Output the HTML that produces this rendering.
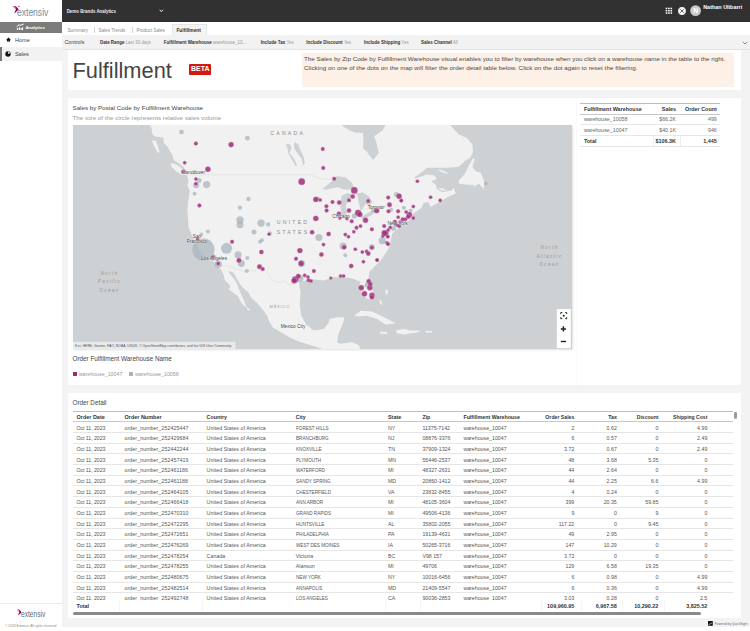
<!DOCTYPE html>
<html><head><meta charset="utf-8">
<style>
*{box-sizing:border-box;margin:0;padding:0}
html,body{width:750px;height:631px;overflow:hidden;background:#f3f3f3;font-family:"Liberation Sans",sans-serif;color:#333}
.a{position:absolute;white-space:nowrap}
.b{font-weight:bold}
#side{position:absolute;left:0;top:0;width:62px;height:631px;background:#fff}
#hdr{position:absolute;left:62px;top:0;width:688px;height:22px;background:#313131}
#tabs{position:absolute;left:62px;top:22px;width:688px;height:13px;background:#fff}
#ctl{position:absolute;left:62px;top:35px;width:688px;height:14.5px;background:#f2f2f2;border-bottom:1px solid #e4e4e4}
.card{position:absolute;background:#fff}
table{border-collapse:collapse}
</style></head><body>

<!-- sidebar -->
<div id="side">
  <svg class="a" style="left:0;top:0" width="62" height="22" viewBox="0 0 62 22">
    <polygon points="12.6,6.0 15.6,6.0 18.6,9.6 14.2,13.6 16.0,9.6" fill="#e24fa5"/>
    <polygon points="15.6,6.0 18.6,9.6 14.2,13.6 16.0,9.6" fill="#8a0a52"/>
    <polygon points="17.8,6.1 19.9,6.1 18.9,7.6" fill="#c23a8a"/>
  </svg>
  <div class="a" style="left:17.3px;top:5px;line-height:14px;font-size:10.8px;color:#6f8ba0;transform:scaleX(0.79);transform-origin:0 0">extensiv</div>
  <div class="a" style="left:0;top:22.2px;width:62px;height:10.8px;background:#7b7b7b"></div>
  <svg class="a" style="left:0;top:22px" width="30" height="11" viewBox="0 22 30 11">
    <polyline points="16.9,26.5 19.1,24.8 20.9,25.3 23.3,24.1" fill="none" stroke="#fff" stroke-width="1" stroke-linecap="round" stroke-linejoin="round"/>
    <g fill="#fff"><rect x="16.9" y="28.1" width="1.1" height="1.9"/><rect x="18.8" y="27.3" width="1.3" height="2.7"/><rect x="20.7" y="28.1" width="1.0" height="1.9"/><rect x="22.0" y="27.3" width="1.1" height="2.7"/></g>
  </svg>
  <div class="a b" style="left:25.4px;top:23.3px;line-height:10.3px;font-size:4.4px;color:#fff">Analytics</div>
  <div class="a" style="left:0;top:46.5px;width:62px;height:0.6px;background:#ececec"></div>
  <svg class="a" style="left:5.5px;top:37.3px" width="5" height="5" viewBox="0 0 5 5">
    <polygon points="2.5,0.5 4.8,2.7 4.1,2.7 4.1,4.6 0.9,4.6 0.9,2.7 0.2,2.7" fill="#111"/><rect x="2.1" y="3.3" width="0.8" height="1.3" fill="#555"/>
  </svg>
  <div class="a" style="left:14.9px;top:35.7px;line-height:8px;font-size:5.6px;color:#444">Home</div>
  <div class="a" style="left:0;top:47px;width:62px;height:14px;background:#f2f2f2;border-left:2px solid #777"></div>
  <svg class="a" style="left:4.8px;top:51px" width="6" height="6" viewBox="0 0 6 6">
    <circle cx="3" cy="3" r="2.7" fill="#111"/><path d="M3,3 L3,0.6 A2.4,2.4 0 0 1 5.2,2.2 Z" fill="#fff" opacity="0.85"/>
  </svg>
  <div class="a" style="left:14.9px;top:49.6px;line-height:8px;font-size:5.6px;color:#444">Sales</div>
  <div class="a" style="left:0;top:603.3px;width:62px;height:0.6px;background:#eaeaea"></div>
  <svg class="a" style="left:0;top:604px" width="62" height="16" viewBox="0 604 62 16">
    <polygon points="16.7,609.5 19.0,609.5 21.6,612.3 18.0,615.6 19.4,612.3" fill="#e24fa5"/>
    <polygon points="19.0,609.5 21.6,612.3 18.0,615.6 19.4,612.3" fill="#8a0a52"/>
  </svg>
  <div class="a" style="left:20.5px;top:607.5px;line-height:12px;font-size:8.6px;color:#4e6f88;transform:scaleX(0.77);transform-origin:0 0">extensiv</div>
  <div class="a" style="left:5px;top:624px;line-height:5px;font-size:3.27px;color:#888">© 2023 Extensiv. All rights reserved</div>
</div>

<!-- header -->
<div id="hdr">
  <div class="a b" style="left:4.7px;top:6.5px;line-height:10px;font-size:4.41px;color:#eee">Demo Brands Analytics</div>
  <svg class="a" style="left:96.5px;top:8.8px" width="5" height="4" viewBox="0 0 5 4"><polyline points="0.6,0.8 2.3,2.6 4.0,0.8" fill="none" stroke="#fff" stroke-width="1"/></svg>
  <svg class="a" style="left:603px;top:7px" width="8" height="8" viewBox="0 0 8 8">
    <g fill="#fff"><rect x="0.7" y="0.7" width="1.6" height="1.5"/><rect x="3.1" y="0.7" width="1.6" height="1.5"/><rect x="5.5" y="0.7" width="1.6" height="1.5"/>
    <rect x="0.7" y="3.0" width="1.6" height="1.5"/><rect x="3.1" y="3.0" width="1.6" height="1.5"/><rect x="5.5" y="3.0" width="1.6" height="1.5"/>
    <rect x="0.7" y="5.3" width="1.6" height="1.5"/><rect x="3.1" y="5.3" width="1.6" height="1.5"/><rect x="5.5" y="5.3" width="1.6" height="1.5"/></g>
  </svg>
  <svg class="a" style="left:614.5px;top:5.8px" width="10" height="10" viewBox="0 0 10 10">
    <circle cx="5" cy="5" r="3.9" fill="#f4f4f4"/><circle cx="5" cy="5" r="0.9" fill="#222"/>
    <g stroke="#333" stroke-width="0.6"><line x1="2.6" y1="2.6" x2="3.9" y2="3.9"/><line x1="7.4" y1="2.6" x2="6.1" y2="3.9"/><line x1="2.6" y1="7.4" x2="3.9" y2="6.1"/><line x1="7.4" y1="7.4" x2="6.1" y2="6.1"/></g>
  </svg>
  <svg class="a" style="left:627.5px;top:4.8px" width="11.5" height="11.5" viewBox="0 0 11.5 11.5">
    <circle cx="5.6" cy="5.6" r="5.4" fill="#c9c9c9"/>
    <text x="5.6" y="8.0" font-size="6.8" font-weight="bold" fill="#fff" text-anchor="middle" style="font-family:'Liberation Sans'">N</text>
  </svg>
  <div class="a b" style="left:641.2px;top:2.5px;line-height:8px;font-size:5.44px;color:#fff">Nathan Ulibarri</div>
</div>

<!-- tabs -->
<div id="tabs">
  <div class="a" style="left:5.4px;top:4px;line-height:9px;font-size:4.82px;color:#8a8a8a">Summary</div>
  <div class="a" style="left:32.2px;top:5px;width:0.6px;height:6px;background:#d5d5d5"></div>
  <div class="a" style="left:36.4px;top:4px;line-height:9px;font-size:4.63px;color:#8a8a8a">Sales Trends</div>
  <div class="a" style="left:70px;top:5px;width:0.6px;height:6px;background:#d5d5d5"></div>
  <div class="a" style="left:74.4px;top:4px;line-height:9px;font-size:4.59px;color:#8a8a8a">Product Sales</div>
  <div class="a" style="left:110.3px;top:2px;width:34.4px;height:11px;background:#f4f4f4;border:0.6px solid #e6e6e6;border-bottom:none"></div>
  <div class="a b" style="left:114.4px;top:4px;line-height:9px;font-size:4.87px;color:#333">Fulfillment</div>
</div>

<!-- controls -->
<div id="ctl">
  <div class="a" style="left:2.5px;top:-0.4px;line-height:14px;font-size:5.37px;color:#444">Controls</div>
  <div class="a" style="left:38px;top:0.5px;line-height:14px;font-size:4.44px;color:#999"><b style="color:#333">Date Range</b> Last 30 days</div>
  <div class="a" style="left:101.7px;top:0.5px;line-height:14px;font-size:4.5px;color:#999"><b style="color:#333">Fulfillment Warehouse</b> warehouse_10...</div>
  <div class="a" style="left:198.8px;top:0.5px;line-height:14px;font-size:4.5px;color:#999"><b style="color:#333">Include Tax</b> Yes</div>
  <div class="a" style="left:244.3px;top:0.5px;line-height:14px;font-size:4.5px;color:#999"><b style="color:#333">Include Discount</b> Yes</div>
  <div class="a" style="left:301.9px;top:0.5px;line-height:14px;font-size:4.5px;color:#999"><b style="color:#333">Include Shipping</b> Yes</div>
  <div class="a" style="left:358.9px;top:0.5px;line-height:14px;font-size:4.5px;color:#999"><b style="color:#333">Sales Channel</b> All</div>
  <svg class="a" style="left:679.5px;top:5.5px" width="6" height="4" viewBox="0 0 6 4"><polyline points="0.8,0.8 3,3 5.2,0.8" fill="none" stroke="#666" stroke-width="0.7"/></svg>
</div>

<!-- card 1 -->
<div class="card" style="left:68px;top:50px;width:672.5px;height:40.3px">
  <div class="a" style="left:4.5px;top:4.2px;line-height:34px;font-size:21.8px;color:#444">Fulfillment</div>
  <div class="a b" style="left:121.2px;top:14.4px;width:22.1px;height:10.8px;background:#d11a0f;border-radius:1px;color:#fff;font-size:7px;line-height:10.8px;text-align:center">BETA</div>
  <div style="position:absolute;left:233.5px;top:3px;width:432px;height:34px;background:#fdf0e6"></div>
  <div class="a" style="left:236px;top:5.3px;line-height:8.5px;font-size:6.26px;color:#4a4a4a">The Sales by Zip Code by Fulfillment Warehouse visual enables you to filter by warehouse when you click on a warehouse name in the table to the right.</div>
  <div class="a" style="left:236px;top:13.8px;line-height:8.5px;font-size:6.26px;color:#4a4a4a;letter-spacing:0.05px">Clicking on one of the dots on the map will filter the order detail table below. Click on the dot again to reset the filtering.</div>
</div>

<!-- card 2 -->
<div class="card" style="left:68px;top:97.5px;width:672.5px;height:287.5px">
  <div class="a" style="left:4.5px;top:5.4px;line-height:9px;font-size:6.19px;color:#444">Sales by Postal Code by Fulfillment Warehouse</div>
  <div class="a" style="left:4.5px;top:15.9px;line-height:9px;font-size:6.25px;color:#999">The size of the circle represents relative sales volume</div>
    <div class="a" style="left:4.5px;top:256px;line-height:9px;font-size:6.33px;color:#444">Order Fulfillment Warehouse Name</div>
  <div class="a" style="left:4.7px;top:274.1px;width:4.1px;height:4px;background:#9c2b74"></div>
  <div class="a" style="left:10.7px;top:272px;line-height:8px;font-size:5.32px;color:#999">warehouse_10047</div>
  <div class="a" style="left:61px;top:274.1px;width:4px;height:4px;background:#a8b2bb"></div>
  <div class="a" style="left:67px;top:272px;line-height:8px;font-size:5.32px;color:#999">warehouse_10058</div>
</div>

<!-- card 3 -->
<div class="card" style="left:68px;top:392.6px;width:672.5px;height:225.6px">
  <div class="a" style="left:4.5px;top:5px;line-height:9px;font-size:6.31px;color:#444">Order Detail</div>
</div>

<div class="a" style="left:62px;top:627px;width:688px;height:4px;background:#fff"></div>
<div style="position:absolute;left:72.8px;top:124.9px;width:499px;height:224.6px;box-shadow:1px 1px 2px rgba(0,0,0,0.12)"></div>
<svg style="position:absolute;left:72.8px;top:124.9px" width="499" height="224.6" viewBox="72.8 124.9 499 224.6">
<rect x="72.8" y="124.9" width="499" height="224.6" fill="#cdd1d3"/>
<polygon points="149.0,124.5 151.4,127.8 151.9,133.5 154.3,136.4 159.0,136.8 162.8,137.3 163.8,143.0 167.6,146.8 169.5,150.6 172.3,155.4 173.7,160.1 177.5,162.3 180.0,164.2 184.0,167.8 185.6,173.4 187.5,177.2 188.3,181.6 187.2,184.8 189.6,191.2 188.0,200.8 187.2,209.3 188.3,226.4 191.5,235.0 193.6,238.5 200.0,251.3 208.5,259.9 215.8,262.7 218.8,267.6 220.7,269.5 223.6,275.2 224.5,280.0 229.3,284.7 230.2,288.5 227.4,288.5 234.0,293.3 237.8,296.1 240.7,301.8 243.5,305.6 247.3,307.5 249.9,309.6 247.8,310.6 245.4,304.7 242.6,298.0 238.8,289.5 236.9,283.8 234.0,279.0 230.2,274.3 228.3,270.9 233.1,272.4 236.9,279.0 239.7,283.8 243.5,288.5 248.3,292.3 251.1,298.0 255.9,301.8 262.5,309.4 267.3,316.1 268.2,320.0 272.9,327.7 284.0,334.0 290.0,337.7 300.0,341.9 310.9,345.2 325.9,350.0 326.7,351.0 360.4,351.0 358.9,345.1 351.6,342.1 339.9,343.6 336.9,342.1 338.4,333.3 342.8,323.1 344.3,317.2 338.4,317.2 329.6,318.7 328.1,323.1 323.7,328.9 313.5,330.4 306.1,324.5 301.0,315.7 299.5,304.0 300.3,292.3 298.8,282.0 312.0,279.1 323.7,280.5 334.0,276.9 348.7,277.6 354.5,279.1 360.4,282.0 358.9,286.4 361.9,293.7 366.3,298.1 372.1,299.6 373.6,295.2 372.1,289.3 367.7,282.0 369.2,271.7 376.5,264.4 380.9,260.0 385.3,253.3 389.3,246.7 390.7,240.0 392.0,233.3 400.0,226.7 409.3,220.0 413.3,213.3 421.3,208.0 423.2,203.2 428.0,202.0 430.4,206.8 447.2,197.2 455.6,193.3 453.3,187.7 451.1,190.5 446.0,191.5 442.2,192.2 436.6,188.8 435.5,184.4 431.1,181.1 436.6,178.8 434.4,175.5 426.7,174.4 420.0,176.6 415.0,178.5 414.0,177.5 420.0,173.3 426.7,167.7 447.7,167.7 458.8,166.6 464.4,161.1 469.9,157.7 472.7,152.2 472.2,144.4 466.6,137.8 458.8,134.4 454.4,130.0 449.6,124.5" fill="#f1f1f1"/>
<polygon points="170.5,163.3 175.0,163.6 180.5,167.3 185.0,170.8 186.8,174.6 182.0,175.0 176.0,171.2 171.0,166.5" fill="#f1f1f1"/>
<polygon points="151.9,140.2 155.7,140.6 157.6,145.9 159.5,152.5 157.6,152.5 154.3,146.8 152.4,143.0" fill="#f1f1f1"/>
<polygon points="473.8,158.3 472.2,158.9 468.8,165.5 465.5,172.2 462.2,176.6 458.8,180.0 458.3,183.3 464.4,184.4 474.4,184.9 472.7,187.7 478.8,183.3 482.2,187.7 483.3,189.4 484.4,182.2 482.2,176.6 480.5,172.7 475.5,171.1 472.2,166.6 474.4,159.4" fill="#f1f1f1"/>
<polygon points="353.8,315.7 360.4,310.6 372.1,311.3 383.9,317.2 395.6,323.1 385.3,324.5 376.5,318.7 366.3,315.7 358.9,316.5" fill="#f1f1f1"/>
<polygon points="396.0,330.2 404.0,329.0 410.0,330.5 418.0,330.5 420.0,332.0 410.0,333.5 404.0,334.5 396.0,333.0" fill="#f1f1f1"/>
<polygon points="379.5,331.5 387.0,332.0 387.0,334.0 380.0,333.5" fill="#f1f1f1"/>
<polygon points="425.3,330.7 432.0,330.7 432.0,332.5 425.3,332.5" fill="#f1f1f1"/>
<polygon points="386.0,289.0 388.0,290.5 386.5,296.0 385.0,292.0" fill="#f1f1f1"/>
<polygon points="379.0,300.0 381.0,300.5 382.0,305.0 380.0,304.0" fill="#f1f1f1"/>
<polygon points="340.3,124.0 344.0,126.8 349.6,130.5 354.3,132.4 362.7,132.9 363.1,138.0 363.1,148.3 366.4,151.1 370.1,156.7 373.0,160.0 378.6,152.9 375.8,140.8 373.9,136.1 382.3,130.5 386.0,124.0" fill="#cdd1d3"/>
<polygon points="294.0,142.1 297.8,143.6 300.7,151.2 303.5,156.9 304.5,163.5 302.6,165.4 301.6,158.8 297.8,154.0 294.0,148.3" fill="#cdd1d3"/>
<polygon points="285.5,144.5 289.3,144.0 291.2,147.4 289.3,153.1 294.0,158.8 296.9,165.4 295.5,166.4 293.1,161.6 288.3,154.0 287.4,148.3" fill="#cdd1d3"/>
<polygon points="322.1,188.7 328.5,183.9 337.1,175.9 345.6,177.5 352.0,182.8 354.1,188.7 347.7,189.7 342.4,189.2 338.1,187.1 331.7,188.1 326.4,189.7" fill="#cdd1d3"/>
<polygon points="341.3,195.6 347.7,192.9 352.0,194.5 348.8,199.9 345.6,205.2 346.7,212.7 344.5,216.9 341.3,214.8 340.3,206.3" fill="#cdd1d3"/>
<polygon points="355.2,193.5 362.7,192.4 369.1,196.7 372.3,202.0 370.1,205.2 364.8,204.1 362.7,208.4 360.5,210.5 358.4,202.0 357.3,195.6" fill="#cdd1d3"/>
<polygon points="360.5,216.9 368.0,212.7 375.5,209.5 379.7,207.3 377.6,210.5 370.1,215.9 362.7,219.1" fill="#cdd1d3"/>
<polygon points="373.3,207.9 379.7,206.3 386.1,205.2 384.0,207.9 376.5,209.5" fill="#cdd1d3"/>
<polygon points="437.8,169.2 441.0,169.6 447.7,172.8 447.0,173.6 441.0,172.0" fill="#f1f1f1"/>
<polygon points="438.0,187.8 443.0,188.3 446.6,190.6 441.0,190.2" fill="#f1f1f1"/>
<polyline points="185,174.7 309.7,174.5 311.2,175 321.6,178.8 332.1,179.7 345,177" fill="none" stroke="#ddd9d3" stroke-width="0.5"/>
<polyline points="218,265.2 227.4,265.7 243.5,270.9 255.9,270.5 257.8,267.6 266.3,271.4 271.1,279 277.5,282.5 283.9,281 290.2,285 298.8,282" fill="none" stroke="#ddd9d3" stroke-width="0.5"/>
<text x="287.5" y="134.9" font-size="5.2" letter-spacing="2.2" fill="#8c8c8c" text-anchor="middle" style="font-family:'Liberation Sans';">CANADA</text>
<text x="292.8" y="223.9" font-size="5.2" letter-spacing="2.2" fill="#8c8c8c" text-anchor="middle" style="font-family:'Liberation Sans';">UNITED</text>
<text x="292.8" y="233.9" font-size="5.2" letter-spacing="2.2" fill="#8c8c8c" text-anchor="middle" style="font-family:'Liberation Sans';">STATES</text>
<text x="279.6" y="308" font-size="4" letter-spacing="0.8" fill="#9a9a9a" text-anchor="middle" style="font-family:'Liberation Sans';">MÉXICO</text>
<text x="109.3" y="274.5" font-size="4.6" letter-spacing="1.4" fill="#999" text-anchor="middle" style="font-family:'Liberation Sans';font-style:italic;">North</text>
<text x="109.3" y="283" font-size="4.6" letter-spacing="1.4" fill="#999" text-anchor="middle" style="font-family:'Liberation Sans';font-style:italic;">Pacific</text>
<text x="109.3" y="291.8" font-size="4.6" letter-spacing="1.4" fill="#999" text-anchor="middle" style="font-family:'Liberation Sans';font-style:italic;">Ocean</text>
<text x="549.3" y="249" font-size="4.6" letter-spacing="1.4" fill="#999" text-anchor="middle" style="font-family:'Liberation Sans';font-style:italic;">North</text>
<text x="549.3" y="257.5" font-size="4.6" letter-spacing="1.4" fill="#999" text-anchor="middle" style="font-family:'Liberation Sans';font-style:italic;">Atlantic</text>
<text x="549.3" y="266" font-size="4.6" letter-spacing="1.4" fill="#999" text-anchor="middle" style="font-family:'Liberation Sans';font-style:italic;">Ocean</text>
<circle cx="181.3" cy="132" r="2.4" fill="#a9b4bd" fill-opacity="0.75"/>
<circle cx="247.2" cy="138.1" r="2.4" fill="#a9b4bd" fill-opacity="0.75"/>
<circle cx="194.4" cy="172" r="2" fill="#a9b4bd" fill-opacity="0.75"/>
<circle cx="198.9" cy="180.3" r="2.5" fill="#a9b4bd" fill-opacity="0.75"/>
<circle cx="196" cy="185.1" r="3" fill="#a9b4bd" fill-opacity="0.75"/>
<circle cx="206.4" cy="184.5" r="3.6" fill="#a9b4bd" fill-opacity="0.75"/>
<circle cx="194.4" cy="193.6" r="2" fill="#a9b4bd" fill-opacity="0.75"/>
<circle cx="248.2" cy="198.9" r="2.2" fill="#a9b4bd" fill-opacity="0.75"/>
<circle cx="239.8" cy="207.5" r="2.2" fill="#a9b4bd" fill-opacity="0.75"/>
<circle cx="207.7" cy="231.3" r="2" fill="#a9b4bd" fill-opacity="0.75"/>
<circle cx="201" cy="234.5" r="2" fill="#a9b4bd" fill-opacity="0.75"/>
<circle cx="203.2" cy="249.6" r="11.1" fill="#a9b4bd" fill-opacity="0.75"/>
<circle cx="226.4" cy="248.2" r="5.5" fill="#a9b4bd" fill-opacity="0.75"/>
<circle cx="237.9" cy="254.7" r="3.5" fill="#a9b4bd" fill-opacity="0.75"/>
<circle cx="241.1" cy="263.4" r="3.5" fill="#a9b4bd" fill-opacity="0.75"/>
<circle cx="247.1" cy="257.9" r="2" fill="#a9b4bd" fill-opacity="0.75"/>
<circle cx="246.6" cy="270.9" r="2" fill="#a9b4bd" fill-opacity="0.75"/>
<circle cx="212.8" cy="257.7" r="3.2" fill="#a9b4bd" fill-opacity="0.75"/>
<circle cx="218.1" cy="264.1" r="3.6" fill="#a9b4bd" fill-opacity="0.75"/>
<circle cx="239.8" cy="219.9" r="3.7" fill="#a9b4bd" fill-opacity="0.75"/>
<circle cx="239.8" cy="224.6" r="3.5" fill="#a9b4bd" fill-opacity="0.75"/>
<circle cx="260.9" cy="223" r="3.7" fill="#a9b4bd" fill-opacity="0.75"/>
<circle cx="268" cy="224.3" r="2.2" fill="#a9b4bd" fill-opacity="0.75"/>
<circle cx="253.8" cy="231.8" r="2.5" fill="#a9b4bd" fill-opacity="0.75"/>
<circle cx="269.6" cy="233.3" r="2.2" fill="#a9b4bd" fill-opacity="0.75"/>
<circle cx="261.7" cy="240.2" r="2" fill="#a9b4bd" fill-opacity="0.75"/>
<circle cx="259.8" cy="241.7" r="2" fill="#a9b4bd" fill-opacity="0.75"/>
<circle cx="317.5" cy="198.5" r="2.2" fill="#a9b4bd" fill-opacity="0.75"/>
<circle cx="318.7" cy="237.3" r="3.5" fill="#a9b4bd" fill-opacity="0.75"/>
<circle cx="301.3" cy="263.4" r="3.5" fill="#a9b4bd" fill-opacity="0.75"/>
<circle cx="299.7" cy="278.5" r="3.5" fill="#a9b4bd" fill-opacity="0.75"/>
<circle cx="330.6" cy="278" r="2" fill="#a9b4bd" fill-opacity="0.75"/>
<circle cx="354.1" cy="215.9" r="2.5" fill="#a9b4bd" fill-opacity="0.75"/>
<circle cx="373.3" cy="210" r="2.5" fill="#a9b4bd" fill-opacity="0.75"/>
<circle cx="342.9" cy="246" r="3.5" fill="#a9b4bd" fill-opacity="0.75"/>
<circle cx="345.1" cy="255.2" r="2" fill="#a9b4bd" fill-opacity="0.75"/>
<circle cx="371.7" cy="247.1" r="3" fill="#a9b4bd" fill-opacity="0.75"/>
<circle cx="366.8" cy="285" r="2.5" fill="#a9b4bd" fill-opacity="0.75"/>
<circle cx="390.9" cy="209.7" r="2" fill="#a9b4bd" fill-opacity="0.75"/>
<circle cx="396.3" cy="194.5" r="2.5" fill="#a9b4bd" fill-opacity="0.75"/>
<circle cx="403.7" cy="207.7" r="2" fill="#a9b4bd" fill-opacity="0.75"/>
<circle cx="410.4" cy="210.7" r="2" fill="#a9b4bd" fill-opacity="0.75"/>
<circle cx="393.3" cy="228.3" r="2.5" fill="#a9b4bd" fill-opacity="0.75"/>
<circle cx="382" cy="240.7" r="3.5" fill="#a9b4bd" fill-opacity="0.75"/>
<circle cx="485.6" cy="183.5" r="2" fill="#a9b4bd" fill-opacity="0.75"/>
<circle cx="195.7" cy="143.5" r="1.98" fill="#a1317b" fill-opacity="0.88" stroke="#d9a8c9" stroke-opacity="0.8" stroke-width="0.45"/>
<circle cx="230.9" cy="144.5" r="2.70" fill="#a1317b" fill-opacity="0.88" stroke="#d9a8c9" stroke-opacity="0.8" stroke-width="0.45"/>
<circle cx="184.5" cy="162.7" r="1.80" fill="#a1317b" fill-opacity="0.88" stroke="#d9a8c9" stroke-opacity="0.8" stroke-width="0.45"/>
<circle cx="207.7" cy="169.1" r="2.70" fill="#a1317b" fill-opacity="0.88" stroke="#d9a8c9" stroke-opacity="0.8" stroke-width="0.45"/>
<circle cx="183.2" cy="171.7" r="2.25" fill="#a1317b" fill-opacity="0.88" stroke="#d9a8c9" stroke-opacity="0.8" stroke-width="0.45"/>
<circle cx="195.7" cy="178.9" r="1.80" fill="#a1317b" fill-opacity="0.88" stroke="#d9a8c9" stroke-opacity="0.8" stroke-width="0.45"/>
<circle cx="195.7" cy="183.7" r="1.80" fill="#a1317b" fill-opacity="0.88" stroke="#d9a8c9" stroke-opacity="0.8" stroke-width="0.45"/>
<circle cx="199.2" cy="205.3" r="1.98" fill="#a1317b" fill-opacity="0.88" stroke="#d9a8c9" stroke-opacity="0.8" stroke-width="0.45"/>
<circle cx="231.9" cy="241.7" r="1.98" fill="#a1317b" fill-opacity="0.88" stroke="#d9a8c9" stroke-opacity="0.8" stroke-width="0.45"/>
<circle cx="238.7" cy="260.3" r="2.43" fill="#a1317b" fill-opacity="0.88" stroke="#d9a8c9" stroke-opacity="0.8" stroke-width="0.45"/>
<circle cx="213" cy="257" r="1.80" fill="#a1317b" fill-opacity="0.88" stroke="#d9a8c9" stroke-opacity="0.8" stroke-width="0.45"/>
<circle cx="218" cy="263.5" r="1.80" fill="#a1317b" fill-opacity="0.88" stroke="#d9a8c9" stroke-opacity="0.8" stroke-width="0.45"/>
<circle cx="197.5" cy="239" r="1.98" fill="#a1317b" fill-opacity="0.88" stroke="#d9a8c9" stroke-opacity="0.8" stroke-width="0.45"/>
<circle cx="268.8" cy="234.1" r="1.62" fill="#a1317b" fill-opacity="0.88" stroke="#d9a8c9" stroke-opacity="0.8" stroke-width="0.45"/>
<circle cx="261.2" cy="252" r="2.25" fill="#a1317b" fill-opacity="0.88" stroke="#d9a8c9" stroke-opacity="0.8" stroke-width="0.45"/>
<circle cx="259.3" cy="266.6" r="2.43" fill="#a1317b" fill-opacity="0.88" stroke="#d9a8c9" stroke-opacity="0.8" stroke-width="0.45"/>
<circle cx="262.5" cy="269" r="1.98" fill="#a1317b" fill-opacity="0.88" stroke="#d9a8c9" stroke-opacity="0.8" stroke-width="0.45"/>
<circle cx="322.6" cy="148.8" r="1.98" fill="#a1317b" fill-opacity="0.88" stroke="#d9a8c9" stroke-opacity="0.8" stroke-width="0.45"/>
<circle cx="323" cy="167.8" r="1.98" fill="#a1317b" fill-opacity="0.88" stroke="#d9a8c9" stroke-opacity="0.8" stroke-width="0.45"/>
<circle cx="334" cy="178.6" r="1.98" fill="#a1317b" fill-opacity="0.88" stroke="#d9a8c9" stroke-opacity="0.8" stroke-width="0.45"/>
<circle cx="301.5" cy="181.6" r="3.33" fill="#a1317b" fill-opacity="0.88" stroke="#d9a8c9" stroke-opacity="0.8" stroke-width="0.45"/>
<circle cx="315.6" cy="199.3" r="2.70" fill="#a1317b" fill-opacity="0.88" stroke="#d9a8c9" stroke-opacity="0.8" stroke-width="0.45"/>
<circle cx="315.6" cy="218.3" r="2.70" fill="#a1317b" fill-opacity="0.88" stroke="#d9a8c9" stroke-opacity="0.8" stroke-width="0.45"/>
<circle cx="311.9" cy="232.1" r="2.25" fill="#a1317b" fill-opacity="0.88" stroke="#d9a8c9" stroke-opacity="0.8" stroke-width="0.45"/>
<circle cx="299.7" cy="250.5" r="2.70" fill="#a1317b" fill-opacity="0.88" stroke="#d9a8c9" stroke-opacity="0.8" stroke-width="0.45"/>
<circle cx="295.8" cy="258.7" r="1.98" fill="#a1317b" fill-opacity="0.88" stroke="#d9a8c9" stroke-opacity="0.8" stroke-width="0.45"/>
<circle cx="301" cy="263.4" r="2.70" fill="#a1317b" fill-opacity="0.88" stroke="#d9a8c9" stroke-opacity="0.8" stroke-width="0.45"/>
<circle cx="313.7" cy="270.9" r="1.98" fill="#a1317b" fill-opacity="0.88" stroke="#d9a8c9" stroke-opacity="0.8" stroke-width="0.45"/>
<circle cx="323.3" cy="244.5" r="1.80" fill="#a1317b" fill-opacity="0.88" stroke="#d9a8c9" stroke-opacity="0.8" stroke-width="0.45"/>
<circle cx="321.2" cy="254.5" r="2.25" fill="#a1317b" fill-opacity="0.88" stroke="#d9a8c9" stroke-opacity="0.8" stroke-width="0.45"/>
<circle cx="328.4" cy="233.9" r="2.25" fill="#a1317b" fill-opacity="0.88" stroke="#d9a8c9" stroke-opacity="0.8" stroke-width="0.45"/>
<circle cx="295" cy="279.3" r="3.15" fill="#a1317b" fill-opacity="0.88" stroke="#d9a8c9" stroke-opacity="0.8" stroke-width="0.45"/>
<circle cx="298.1" cy="276.1" r="2.43" fill="#a1317b" fill-opacity="0.88" stroke="#d9a8c9" stroke-opacity="0.8" stroke-width="0.45"/>
<circle cx="304.5" cy="275.3" r="1.80" fill="#a1317b" fill-opacity="0.88" stroke="#d9a8c9" stroke-opacity="0.8" stroke-width="0.45"/>
<circle cx="307.7" cy="276.9" r="1.80" fill="#a1317b" fill-opacity="0.88" stroke="#d9a8c9" stroke-opacity="0.8" stroke-width="0.45"/>
<circle cx="308.4" cy="280.1" r="1.98" fill="#a1317b" fill-opacity="0.88" stroke="#d9a8c9" stroke-opacity="0.8" stroke-width="0.45"/>
<circle cx="310.8" cy="280.9" r="1.80" fill="#a1317b" fill-opacity="0.88" stroke="#d9a8c9" stroke-opacity="0.8" stroke-width="0.45"/>
<circle cx="293.9" cy="280.6" r="2.70" fill="#a1317b" fill-opacity="0.88" stroke="#d9a8c9" stroke-opacity="0.8" stroke-width="0.45"/>
<circle cx="330.6" cy="278" r="1.44" fill="#a1317b" fill-opacity="0.88" stroke="#d9a8c9" stroke-opacity="0.8" stroke-width="0.45"/>
<circle cx="340.4" cy="275.9" r="1.80" fill="#a1317b" fill-opacity="0.88" stroke="#d9a8c9" stroke-opacity="0.8" stroke-width="0.45"/>
<circle cx="343.4" cy="275.9" r="1.80" fill="#a1317b" fill-opacity="0.88" stroke="#d9a8c9" stroke-opacity="0.8" stroke-width="0.45"/>
<circle cx="354.1" cy="190.3" r="3.33" fill="#a1317b" fill-opacity="0.88" stroke="#d9a8c9" stroke-opacity="0.8" stroke-width="0.45"/>
<circle cx="352.5" cy="196.5" r="2.25" fill="#a1317b" fill-opacity="0.88" stroke="#d9a8c9" stroke-opacity="0.8" stroke-width="0.45"/>
<circle cx="348.8" cy="200.1" r="1.98" fill="#a1317b" fill-opacity="0.88" stroke="#d9a8c9" stroke-opacity="0.8" stroke-width="0.45"/>
<circle cx="339" cy="202.5" r="2.25" fill="#a1317b" fill-opacity="0.88" stroke="#d9a8c9" stroke-opacity="0.8" stroke-width="0.45"/>
<circle cx="332.3" cy="201.8" r="1.98" fill="#a1317b" fill-opacity="0.88" stroke="#d9a8c9" stroke-opacity="0.8" stroke-width="0.45"/>
<circle cx="326.2" cy="206.1" r="1.98" fill="#a1317b" fill-opacity="0.88" stroke="#d9a8c9" stroke-opacity="0.8" stroke-width="0.45"/>
<circle cx="326.4" cy="210.5" r="1.98" fill="#a1317b" fill-opacity="0.88" stroke="#d9a8c9" stroke-opacity="0.8" stroke-width="0.45"/>
<circle cx="348.8" cy="210.5" r="2.25" fill="#a1317b" fill-opacity="0.88" stroke="#d9a8c9" stroke-opacity="0.8" stroke-width="0.45"/>
<circle cx="338.7" cy="213.7" r="2.25" fill="#a1317b" fill-opacity="0.88" stroke="#d9a8c9" stroke-opacity="0.8" stroke-width="0.45"/>
<circle cx="339.7" cy="218" r="1.80" fill="#a1317b" fill-opacity="0.88" stroke="#d9a8c9" stroke-opacity="0.8" stroke-width="0.45"/>
<circle cx="346.7" cy="218.5" r="1.80" fill="#a1317b" fill-opacity="0.88" stroke="#d9a8c9" stroke-opacity="0.8" stroke-width="0.45"/>
<circle cx="357.9" cy="212.7" r="3.15" fill="#a1317b" fill-opacity="0.88" stroke="#d9a8c9" stroke-opacity="0.8" stroke-width="0.45"/>
<circle cx="359.5" cy="214.3" r="2.70" fill="#a1317b" fill-opacity="0.88" stroke="#d9a8c9" stroke-opacity="0.8" stroke-width="0.45"/>
<circle cx="351.5" cy="221.2" r="1.98" fill="#a1317b" fill-opacity="0.88" stroke="#d9a8c9" stroke-opacity="0.8" stroke-width="0.45"/>
<circle cx="356.3" cy="227.6" r="1.98" fill="#a1317b" fill-opacity="0.88" stroke="#d9a8c9" stroke-opacity="0.8" stroke-width="0.45"/>
<circle cx="360.3" cy="226" r="1.80" fill="#a1317b" fill-opacity="0.88" stroke="#d9a8c9" stroke-opacity="0.8" stroke-width="0.45"/>
<circle cx="365.3" cy="220.1" r="2.70" fill="#a1317b" fill-opacity="0.88" stroke="#d9a8c9" stroke-opacity="0.8" stroke-width="0.45"/>
<circle cx="368" cy="200.9" r="1.98" fill="#a1317b" fill-opacity="0.88" stroke="#d9a8c9" stroke-opacity="0.8" stroke-width="0.45"/>
<circle cx="376.5" cy="210.5" r="2.70" fill="#a1317b" fill-opacity="0.88" stroke="#d9a8c9" stroke-opacity="0.8" stroke-width="0.45"/>
<circle cx="320" cy="199.9" r="1.80" fill="#a1317b" fill-opacity="0.88" stroke="#d9a8c9" stroke-opacity="0.8" stroke-width="0.45"/>
<circle cx="371.7" cy="229.2" r="1.98" fill="#a1317b" fill-opacity="0.88" stroke="#d9a8c9" stroke-opacity="0.8" stroke-width="0.45"/>
<circle cx="384" cy="226" r="1.98" fill="#a1317b" fill-opacity="0.88" stroke="#d9a8c9" stroke-opacity="0.8" stroke-width="0.45"/>
<circle cx="345.1" cy="234.5" r="1.80" fill="#a1317b" fill-opacity="0.88" stroke="#d9a8c9" stroke-opacity="0.8" stroke-width="0.45"/>
<circle cx="348.3" cy="236.6" r="1.80" fill="#a1317b" fill-opacity="0.88" stroke="#d9a8c9" stroke-opacity="0.8" stroke-width="0.45"/>
<circle cx="353.6" cy="231.7" r="1.80" fill="#a1317b" fill-opacity="0.88" stroke="#d9a8c9" stroke-opacity="0.8" stroke-width="0.45"/>
<circle cx="344" cy="247.1" r="2.25" fill="#a1317b" fill-opacity="0.88" stroke="#d9a8c9" stroke-opacity="0.8" stroke-width="0.45"/>
<circle cx="355.1" cy="249.2" r="1.80" fill="#a1317b" fill-opacity="0.88" stroke="#d9a8c9" stroke-opacity="0.8" stroke-width="0.45"/>
<circle cx="371.7" cy="247.5" r="1.98" fill="#a1317b" fill-opacity="0.88" stroke="#d9a8c9" stroke-opacity="0.8" stroke-width="0.45"/>
<circle cx="362.1" cy="252" r="1.80" fill="#a1317b" fill-opacity="0.88" stroke="#d9a8c9" stroke-opacity="0.8" stroke-width="0.45"/>
<circle cx="366.4" cy="251.3" r="1.80" fill="#a1317b" fill-opacity="0.88" stroke="#d9a8c9" stroke-opacity="0.8" stroke-width="0.45"/>
<circle cx="368.1" cy="253.5" r="2.25" fill="#a1317b" fill-opacity="0.88" stroke="#d9a8c9" stroke-opacity="0.8" stroke-width="0.45"/>
<circle cx="351" cy="265.8" r="2.25" fill="#a1317b" fill-opacity="0.88" stroke="#d9a8c9" stroke-opacity="0.8" stroke-width="0.45"/>
<circle cx="363.2" cy="261.6" r="1.80" fill="#a1317b" fill-opacity="0.88" stroke="#d9a8c9" stroke-opacity="0.8" stroke-width="0.45"/>
<circle cx="377" cy="259.9" r="1.80" fill="#a1317b" fill-opacity="0.88" stroke="#d9a8c9" stroke-opacity="0.8" stroke-width="0.45"/>
<circle cx="376.8" cy="260" r="1.80" fill="#a1317b" fill-opacity="0.88" stroke="#d9a8c9" stroke-opacity="0.8" stroke-width="0.45"/>
<circle cx="368.5" cy="281.2" r="2.25" fill="#a1317b" fill-opacity="0.88" stroke="#d9a8c9" stroke-opacity="0.8" stroke-width="0.45"/>
<circle cx="361.1" cy="287.6" r="2.70" fill="#a1317b" fill-opacity="0.88" stroke="#d9a8c9" stroke-opacity="0.8" stroke-width="0.45"/>
<circle cx="369.6" cy="287.6" r="2.70" fill="#a1317b" fill-opacity="0.88" stroke="#d9a8c9" stroke-opacity="0.8" stroke-width="0.45"/>
<circle cx="364.3" cy="293.6" r="2.70" fill="#a1317b" fill-opacity="0.88" stroke="#d9a8c9" stroke-opacity="0.8" stroke-width="0.45"/>
<circle cx="371.7" cy="295.1" r="2.70" fill="#a1317b" fill-opacity="0.88" stroke="#d9a8c9" stroke-opacity="0.8" stroke-width="0.45"/>
<circle cx="371.7" cy="297.2" r="2.25" fill="#a1317b" fill-opacity="0.88" stroke="#d9a8c9" stroke-opacity="0.8" stroke-width="0.45"/>
<circle cx="370" cy="284" r="2.25" fill="#a1317b" fill-opacity="0.88" stroke="#d9a8c9" stroke-opacity="0.8" stroke-width="0.45"/>
<circle cx="388" cy="197.5" r="1.98" fill="#a1317b" fill-opacity="0.88" stroke="#d9a8c9" stroke-opacity="0.8" stroke-width="0.45"/>
<circle cx="389.3" cy="204.7" r="2.43" fill="#a1317b" fill-opacity="0.88" stroke="#d9a8c9" stroke-opacity="0.8" stroke-width="0.45"/>
<circle cx="388.3" cy="211.1" r="1.98" fill="#a1317b" fill-opacity="0.88" stroke="#d9a8c9" stroke-opacity="0.8" stroke-width="0.45"/>
<circle cx="398.9" cy="196.1" r="2.70" fill="#a1317b" fill-opacity="0.88" stroke="#d9a8c9" stroke-opacity="0.8" stroke-width="0.45"/>
<circle cx="401.1" cy="200.3" r="1.80" fill="#a1317b" fill-opacity="0.88" stroke="#d9a8c9" stroke-opacity="0.8" stroke-width="0.45"/>
<circle cx="397.9" cy="211.1" r="1.98" fill="#a1317b" fill-opacity="0.88" stroke="#d9a8c9" stroke-opacity="0.8" stroke-width="0.45"/>
<circle cx="401.1" cy="200.7" r="1.80" fill="#a1317b" fill-opacity="0.88" stroke="#d9a8c9" stroke-opacity="0.8" stroke-width="0.45"/>
<circle cx="413.1" cy="206.4" r="1.80" fill="#a1317b" fill-opacity="0.88" stroke="#d9a8c9" stroke-opacity="0.8" stroke-width="0.45"/>
<circle cx="406" cy="212" r="1.80" fill="#a1317b" fill-opacity="0.88" stroke="#d9a8c9" stroke-opacity="0.8" stroke-width="0.45"/>
<circle cx="409.3" cy="214.7" r="2.70" fill="#a1317b" fill-opacity="0.88" stroke="#d9a8c9" stroke-opacity="0.8" stroke-width="0.45"/>
<circle cx="408" cy="216.7" r="2.25" fill="#a1317b" fill-opacity="0.88" stroke="#d9a8c9" stroke-opacity="0.8" stroke-width="0.45"/>
<circle cx="413.1" cy="218" r="1.80" fill="#a1317b" fill-opacity="0.88" stroke="#d9a8c9" stroke-opacity="0.8" stroke-width="0.45"/>
<circle cx="398" cy="217.1" r="1.80" fill="#a1317b" fill-opacity="0.88" stroke="#d9a8c9" stroke-opacity="0.8" stroke-width="0.45"/>
<circle cx="402.7" cy="219.3" r="2.25" fill="#a1317b" fill-opacity="0.88" stroke="#d9a8c9" stroke-opacity="0.8" stroke-width="0.45"/>
<circle cx="405.3" cy="219.3" r="1.80" fill="#a1317b" fill-opacity="0.88" stroke="#d9a8c9" stroke-opacity="0.8" stroke-width="0.45"/>
<circle cx="394.7" cy="222" r="2.25" fill="#a1317b" fill-opacity="0.88" stroke="#d9a8c9" stroke-opacity="0.8" stroke-width="0.45"/>
<circle cx="397.3" cy="225.3" r="1.80" fill="#a1317b" fill-opacity="0.88" stroke="#d9a8c9" stroke-opacity="0.8" stroke-width="0.45"/>
<circle cx="388" cy="230" r="1.80" fill="#a1317b" fill-opacity="0.88" stroke="#d9a8c9" stroke-opacity="0.8" stroke-width="0.45"/>
<circle cx="390" cy="227.3" r="1.80" fill="#a1317b" fill-opacity="0.88" stroke="#d9a8c9" stroke-opacity="0.8" stroke-width="0.45"/>
<circle cx="384" cy="232.7" r="2.70" fill="#a1317b" fill-opacity="0.88" stroke="#d9a8c9" stroke-opacity="0.8" stroke-width="0.45"/>
<circle cx="382.7" cy="236" r="1.80" fill="#a1317b" fill-opacity="0.88" stroke="#d9a8c9" stroke-opacity="0.8" stroke-width="0.45"/>
<circle cx="387.3" cy="236.7" r="1.80" fill="#a1317b" fill-opacity="0.88" stroke="#d9a8c9" stroke-opacity="0.8" stroke-width="0.45"/>
<circle cx="386.7" cy="242.7" r="1.80" fill="#a1317b" fill-opacity="0.88" stroke="#d9a8c9" stroke-opacity="0.8" stroke-width="0.45"/>
<circle cx="388" cy="244" r="1.80" fill="#a1317b" fill-opacity="0.88" stroke="#d9a8c9" stroke-opacity="0.8" stroke-width="0.45"/>
<circle cx="385.6" cy="232.8" r="2.70" fill="#a1317b" fill-opacity="0.88" stroke="#d9a8c9" stroke-opacity="0.8" stroke-width="0.45"/>
<circle cx="387.7" cy="236.4" r="1.80" fill="#a1317b" fill-opacity="0.88" stroke="#d9a8c9" stroke-opacity="0.8" stroke-width="0.45"/>
<circle cx="387.7" cy="243.9" r="1.80" fill="#a1317b" fill-opacity="0.88" stroke="#d9a8c9" stroke-opacity="0.8" stroke-width="0.45"/>
<circle cx="384.5" cy="233.2" r="2.70" fill="#a1317b" fill-opacity="0.88" stroke="#d9a8c9" stroke-opacity="0.8" stroke-width="0.45"/>
<circle cx="417.2" cy="181.1" r="1.80" fill="#a1317b" fill-opacity="0.88" stroke="#d9a8c9" stroke-opacity="0.8" stroke-width="0.45"/>
<circle cx="430.4" cy="197.2" r="1.80" fill="#a1317b" fill-opacity="0.88" stroke="#d9a8c9" stroke-opacity="0.8" stroke-width="0.45"/>
<circle cx="440" cy="200.3" r="1.80" fill="#a1317b" fill-opacity="0.88" stroke="#d9a8c9" stroke-opacity="0.8" stroke-width="0.45"/>
<circle cx="399.2" cy="226" r="1.80" fill="#a1317b" fill-opacity="0.88" stroke="#d9a8c9" stroke-opacity="0.8" stroke-width="0.45"/>
<circle cx="395" cy="224" r="1.80" fill="#a1317b" fill-opacity="0.88" stroke="#d9a8c9" stroke-opacity="0.8" stroke-width="0.45"/>
<circle cx="400" cy="222" r="1.80" fill="#a1317b" fill-opacity="0.88" stroke="#d9a8c9" stroke-opacity="0.8" stroke-width="0.45"/>
<text x="193.6" y="174.4" font-size="4.8" letter-spacing="0" fill="#444" text-anchor="middle" stroke="#ffffff" stroke-opacity="0.6" stroke-width="0.7" paint-order="stroke" style="font-family:'Liberation Sans';">Vancouver</text>
<text x="196.8" y="238" font-size="4.8" letter-spacing="0" fill="#444" text-anchor="middle" stroke="#ffffff" stroke-opacity="0.6" stroke-width="0.7" paint-order="stroke" style="font-family:'Liberation Sans';">San</text>
<text x="196.8" y="242.6" font-size="4.8" letter-spacing="0" fill="#444" text-anchor="middle" stroke="#ffffff" stroke-opacity="0.6" stroke-width="0.7" paint-order="stroke" style="font-family:'Liberation Sans';">Francisco</text>
<text x="213.9" y="259.5" font-size="4.8" letter-spacing="0" fill="#444" text-anchor="middle" stroke="#ffffff" stroke-opacity="0.6" stroke-width="0.7" paint-order="stroke" style="font-family:'Liberation Sans';">Los Angeles</text>
<text x="292.8" y="327.8" font-size="4.8" letter-spacing="0" fill="#444" text-anchor="middle" stroke="#ffffff" stroke-opacity="0.6" stroke-width="0.7" paint-order="stroke" style="font-family:'Liberation Sans';">Mexico City</text>
<text x="375.5" y="208.5" font-size="4.8" letter-spacing="0" fill="#444" text-anchor="middle" stroke="#ffffff" stroke-opacity="0.6" stroke-width="0.7" paint-order="stroke" style="font-family:'Liberation Sans';">Toronto</text>
<text x="340.8" y="218.2" font-size="4.8" letter-spacing="0" fill="#444" text-anchor="middle" stroke="#ffffff" stroke-opacity="0.6" stroke-width="0.7" paint-order="stroke" style="font-family:'Liberation Sans';">Chicago</text>
<text x="397.3" y="224.6" font-size="4.8" letter-spacing="0" fill="#444" text-anchor="middle" stroke="#ffffff" stroke-opacity="0.6" stroke-width="0.7" paint-order="stroke" style="font-family:'Liberation Sans';">New York</text>
<rect x="72.8" y="341.7" width="162.5" height="8" fill="#ffffff" fill-opacity="0.55"/>
<text x="74.7" y="347.4" font-size="3.43" fill="#555" style="font-family:'Liberation Sans'"><tspan fill="#2d7ac6">Esri</tspan>, HERE, Garmin, FAO, NOAA, USGS, © OpenStreetMap contributors, and the GIS User Community</text>
<rect x="556.6" y="309" width="14" height="39" fill="#fff"/>
<line x1="557" y1="322" x2="570" y2="322" stroke="#eee" stroke-width="0.5"/><line x1="557" y1="335" x2="570" y2="335" stroke="#eee" stroke-width="0.5"/>
<g stroke="#222" stroke-width="1.0" fill="none"><path d="M560.6,314.0 v-1.5 h1.5 M565.0,312.5 h1.5 v1.5 M566.5,317.1 v1.5 h-1.5 M562.1,318.6 h-1.5 v-1.5"/></g><circle cx="563.55" cy="315.55" r="1.0" fill="#222"/>
<path d="M560.6,328.8 h5.2 M563.2,326.2 v5.2" stroke="#222" stroke-width="1.5"/>
<path d="M560.6,341.4 h5.2" stroke="#222" stroke-width="1.4"/>
</svg>
<div class="a" style="left:575.5px;top:97.5px;width:0.5px;height:287.5px;background:#f9f9f9"></div>
<div class="a" style="left:579.6px;top:103.2px;width:140.8px;height:0.8px;background:#bdbdbd"></div>
<div class="a b" style="left:583.9px;top:105.3px;line-height:8px;font-size:5.42px;color:#333">Fulfillment Warehouse</div>
<div class="a b" style="right:74px;top:105.3px;line-height:8px;font-size:5.42px;color:#333">Sales</div>
<div class="a b" style="right:33.2px;top:105.3px;line-height:8px;font-size:5.42px;color:#333">Order Count</div>
<div class="a" style="left:579.6px;top:113.6px;width:140.8px;height:1px;background:#c8c8c8"></div>
<div class="a" style="left:583.9px;top:115.1px;line-height:8px;font-size:5.3px;color:#666">warehouse_10058</div>
<div class="a" style="right:74px;top:115.1px;line-height:8px;font-size:5.3px;color:#666">$66.2K</div>
<div class="a" style="right:33.2px;top:115.1px;line-height:8px;font-size:5.3px;color:#666">499</div>
<div class="a" style="left:579.6px;top:124.3px;width:140.8px;height:0.6px;background:#e6e6e6"></div>
<div class="a" style="left:583.9px;top:125.6px;line-height:8px;font-size:5.3px;color:#666">warehouse_10047</div>
<div class="a" style="right:74px;top:125.6px;line-height:8px;font-size:5.3px;color:#666">$40.1K</div>
<div class="a" style="right:33.2px;top:125.6px;line-height:8px;font-size:5.3px;color:#666">946</div>
<div class="a" style="left:579.6px;top:134.79999999999998px;width:140.8px;height:0.6px;background:#e6e6e6"></div>
<div class="a b" style="left:583.9px;top:136.9px;line-height:8px;font-size:5.42px;color:#333">Total</div>
<div class="a b" style="right:74px;top:136.9px;line-height:8px;font-size:5.42px;color:#333">$106.3K</div>
<div class="a b" style="right:33.2px;top:136.9px;line-height:8px;font-size:5.42px;color:#333">1,445</div>
<div class="a" style="left:579.6px;top:146px;width:140.8px;height:0.6px;background:#e6e6e6"></div>
<div class="a" style="left:652.6px;top:135.8px;width:0.5px;height:10.2px;background:#eee"></div><div class="a" style="left:680.3px;top:135.8px;width:0.5px;height:10.2px;background:#eee"></div>
<div class="a" style="left:72.8px;top:410.9px;width:660.3000000000001px;height:1px;background:#bdbdbd"></div>
<div class="a b" style="left:76.5px;top:412.9px;line-height:8px;font-size:5.48px;color:#333">Order Date</div>
<div class="a b" style="left:124.5px;top:412.9px;line-height:8px;font-size:5.47px;color:#333">Order Number</div>
<div class="a b" style="left:206.6px;top:412.9px;line-height:8px;font-size:5.32px;color:#333">Country</div>
<div class="a b" style="left:295.8px;top:412.9px;line-height:8px;font-size:5.2px;color:#333">City</div>
<div class="a b" style="left:388px;top:412.9px;line-height:8px;font-size:5.4px;color:#333">State</div>
<div class="a b" style="left:422.4px;top:412.9px;line-height:8px;font-size:5.3px;color:#333">Zip</div>
<div class="a b" style="left:463.4px;top:412.9px;line-height:8px;font-size:5.3px;color:#333">Fulfillment Warehouse</div>
<div class="a b" style="right:175.70000000000005px;top:412.9px;line-height:8px;font-size:5.17px;color:#333">Order Sales</div>
<div class="a b" style="right:133.20000000000005px;top:412.9px;line-height:8px;font-size:5.22px;color:#333">Tax</div>
<div class="a b" style="right:91.60000000000002px;top:412.9px;line-height:8px;font-size:5.05px;color:#333">Discount</div>
<div class="a b" style="right:42.700000000000045px;top:412.9px;line-height:8px;font-size:5.06px;color:#333">Shipping Cost</div>
<div class="a" style="left:72.8px;top:420.8px;width:660.3000000000001px;height:1px;background:#c8c8c8"></div>
<div style="position:absolute;left:72.8px;top:421.8px;width:660.3px;height:177.9px;overflow:hidden">
<div class="a" style="left:3.700000000000003px;top:1.8000000000000114px;line-height:8px;font-size:5.25px;color:#555;letter-spacing:-0.06px;">Oct 11, 2023</div>
<div class="a" style="left:51.7px;top:1.8000000000000114px;line-height:8px;font-size:5.25px;color:#555;letter-spacing:0.08px;">order_number_252425447</div>
<div class="a" style="left:133.8px;top:1.8000000000000114px;line-height:8px;font-size:5.25px;color:#555;letter-spacing:0.06px;">United States of America</div>
<div class="a" style="left:223.0px;top:1.8000000000000114px;line-height:8px;font-size:5.25px;color:#555;transform:scaleX(0.875);transform-origin:0 0;">FOREST HILLS</div>
<div class="a" style="left:315.2px;top:1.8000000000000114px;line-height:8px;font-size:5.25px;color:#555;">NY</div>
<div class="a" style="left:349.59999999999997px;top:1.8000000000000114px;line-height:8px;font-size:5.25px;color:#555;">11375-7142</div>
<div class="a" style="left:390.59999999999997px;top:1.8000000000000114px;line-height:8px;font-size:5.25px;color:#555;">warehouse_10047</div>
<div class="a" style="right:158.80000000000007px;top:1.8000000000000114px;line-height:8px;font-size:5.25px;color:#555">2</div>
<div class="a" style="right:116.30000000000007px;top:1.8000000000000114px;line-height:8px;font-size:5.25px;color:#555">0.62</div>
<div class="a" style="right:74.70000000000005px;top:1.8000000000000114px;line-height:8px;font-size:5.25px;color:#555">0</div>
<div class="a" style="right:25.800000000000068px;top:1.8000000000000114px;line-height:8px;font-size:5.25px;color:#555">4.99</div>
<div class="a" style="left:0;top:10.300000000000011px;width:660.3px;height:0.6px;background:#e6e6e6"></div>
<div class="a" style="left:3.700000000000003px;top:12.480000000000018px;line-height:8px;font-size:5.25px;color:#555;letter-spacing:-0.06px;">Oct 11, 2023</div>
<div class="a" style="left:51.7px;top:12.480000000000018px;line-height:8px;font-size:5.25px;color:#555;letter-spacing:0.08px;">order_number_252429684</div>
<div class="a" style="left:133.8px;top:12.480000000000018px;line-height:8px;font-size:5.25px;color:#555;letter-spacing:0.06px;">United States of America</div>
<div class="a" style="left:223.0px;top:12.480000000000018px;line-height:8px;font-size:5.25px;color:#555;transform:scaleX(0.875);transform-origin:0 0;">BRANCHBURG</div>
<div class="a" style="left:315.2px;top:12.480000000000018px;line-height:8px;font-size:5.25px;color:#555;">NJ</div>
<div class="a" style="left:349.59999999999997px;top:12.480000000000018px;line-height:8px;font-size:5.25px;color:#555;">08876-3376</div>
<div class="a" style="left:390.59999999999997px;top:12.480000000000018px;line-height:8px;font-size:5.25px;color:#555;">warehouse_10047</div>
<div class="a" style="right:158.80000000000007px;top:12.480000000000018px;line-height:8px;font-size:5.25px;color:#555">6</div>
<div class="a" style="right:116.30000000000007px;top:12.480000000000018px;line-height:8px;font-size:5.25px;color:#555">0.57</div>
<div class="a" style="right:74.70000000000005px;top:12.480000000000018px;line-height:8px;font-size:5.25px;color:#555">0</div>
<div class="a" style="right:25.800000000000068px;top:12.480000000000018px;line-height:8px;font-size:5.25px;color:#555">2.49</div>
<div class="a" style="left:0;top:20.980000000000018px;width:660.3px;height:0.6px;background:#e6e6e6"></div>
<div class="a" style="left:3.700000000000003px;top:23.160000000000025px;line-height:8px;font-size:5.25px;color:#555;letter-spacing:-0.06px;">Oct 11, 2023</div>
<div class="a" style="left:51.7px;top:23.160000000000025px;line-height:8px;font-size:5.25px;color:#555;letter-spacing:0.08px;">order_number_252442244</div>
<div class="a" style="left:133.8px;top:23.160000000000025px;line-height:8px;font-size:5.25px;color:#555;letter-spacing:0.06px;">United States of America</div>
<div class="a" style="left:223.0px;top:23.160000000000025px;line-height:8px;font-size:5.25px;color:#555;transform:scaleX(0.875);transform-origin:0 0;">KNOXVILLE</div>
<div class="a" style="left:315.2px;top:23.160000000000025px;line-height:8px;font-size:5.25px;color:#555;">TN</div>
<div class="a" style="left:349.59999999999997px;top:23.160000000000025px;line-height:8px;font-size:5.25px;color:#555;">37909-1324</div>
<div class="a" style="left:390.59999999999997px;top:23.160000000000025px;line-height:8px;font-size:5.25px;color:#555;">warehouse_10047</div>
<div class="a" style="right:158.80000000000007px;top:23.160000000000025px;line-height:8px;font-size:5.25px;color:#555">3.72</div>
<div class="a" style="right:116.30000000000007px;top:23.160000000000025px;line-height:8px;font-size:5.25px;color:#555">0.67</div>
<div class="a" style="right:74.70000000000005px;top:23.160000000000025px;line-height:8px;font-size:5.25px;color:#555">0</div>
<div class="a" style="right:25.800000000000068px;top:23.160000000000025px;line-height:8px;font-size:5.25px;color:#555">2.49</div>
<div class="a" style="left:0;top:31.660000000000025px;width:660.3px;height:0.6px;background:#e6e6e6"></div>
<div class="a" style="left:3.700000000000003px;top:33.84000000000003px;line-height:8px;font-size:5.25px;color:#555;letter-spacing:-0.06px;">Oct 11, 2023</div>
<div class="a" style="left:51.7px;top:33.84000000000003px;line-height:8px;font-size:5.25px;color:#555;letter-spacing:0.08px;">order_number_252457419</div>
<div class="a" style="left:133.8px;top:33.84000000000003px;line-height:8px;font-size:5.25px;color:#555;letter-spacing:0.06px;">United States of America</div>
<div class="a" style="left:223.0px;top:33.84000000000003px;line-height:8px;font-size:5.25px;color:#555;transform:scaleX(0.875);transform-origin:0 0;">PLYMOUTH</div>
<div class="a" style="left:315.2px;top:33.84000000000003px;line-height:8px;font-size:5.25px;color:#555;">MN</div>
<div class="a" style="left:349.59999999999997px;top:33.84000000000003px;line-height:8px;font-size:5.25px;color:#555;">55446-2537</div>
<div class="a" style="left:390.59999999999997px;top:33.84000000000003px;line-height:8px;font-size:5.25px;color:#555;">warehouse_10047</div>
<div class="a" style="right:158.80000000000007px;top:33.84000000000003px;line-height:8px;font-size:5.25px;color:#555">48</div>
<div class="a" style="right:116.30000000000007px;top:33.84000000000003px;line-height:8px;font-size:5.25px;color:#555">3.68</div>
<div class="a" style="right:74.70000000000005px;top:33.84000000000003px;line-height:8px;font-size:5.25px;color:#555">5.35</div>
<div class="a" style="right:25.800000000000068px;top:33.84000000000003px;line-height:8px;font-size:5.25px;color:#555">0</div>
<div class="a" style="left:0;top:42.34000000000003px;width:660.3px;height:0.6px;background:#e6e6e6"></div>
<div class="a" style="left:3.700000000000003px;top:44.52000000000004px;line-height:8px;font-size:5.25px;color:#555;letter-spacing:-0.06px;">Oct 11, 2023</div>
<div class="a" style="left:51.7px;top:44.52000000000004px;line-height:8px;font-size:5.25px;color:#555;letter-spacing:0.08px;">order_number_252461186</div>
<div class="a" style="left:133.8px;top:44.52000000000004px;line-height:8px;font-size:5.25px;color:#555;letter-spacing:0.06px;">United States of America</div>
<div class="a" style="left:223.0px;top:44.52000000000004px;line-height:8px;font-size:5.25px;color:#555;transform:scaleX(0.875);transform-origin:0 0;">WATERFORD</div>
<div class="a" style="left:315.2px;top:44.52000000000004px;line-height:8px;font-size:5.25px;color:#555;">MI</div>
<div class="a" style="left:349.59999999999997px;top:44.52000000000004px;line-height:8px;font-size:5.25px;color:#555;">48327-2631</div>
<div class="a" style="left:390.59999999999997px;top:44.52000000000004px;line-height:8px;font-size:5.25px;color:#555;">warehouse_10047</div>
<div class="a" style="right:158.80000000000007px;top:44.52000000000004px;line-height:8px;font-size:5.25px;color:#555">44</div>
<div class="a" style="right:116.30000000000007px;top:44.52000000000004px;line-height:8px;font-size:5.25px;color:#555">2.64</div>
<div class="a" style="right:74.70000000000005px;top:44.52000000000004px;line-height:8px;font-size:5.25px;color:#555">0</div>
<div class="a" style="right:25.800000000000068px;top:44.52000000000004px;line-height:8px;font-size:5.25px;color:#555">0</div>
<div class="a" style="left:0;top:53.02000000000004px;width:660.3px;height:0.6px;background:#e6e6e6"></div>
<div class="a" style="left:3.700000000000003px;top:55.19999999999999px;line-height:8px;font-size:5.25px;color:#555;letter-spacing:-0.06px;">Oct 11, 2023</div>
<div class="a" style="left:51.7px;top:55.19999999999999px;line-height:8px;font-size:5.25px;color:#555;letter-spacing:0.08px;">order_number_252461188</div>
<div class="a" style="left:133.8px;top:55.19999999999999px;line-height:8px;font-size:5.25px;color:#555;letter-spacing:0.06px;">United States of America</div>
<div class="a" style="left:223.0px;top:55.19999999999999px;line-height:8px;font-size:5.25px;color:#555;transform:scaleX(0.875);transform-origin:0 0;">SANDY SPRING</div>
<div class="a" style="left:315.2px;top:55.19999999999999px;line-height:8px;font-size:5.25px;color:#555;">MD</div>
<div class="a" style="left:349.59999999999997px;top:55.19999999999999px;line-height:8px;font-size:5.25px;color:#555;">20860-1412</div>
<div class="a" style="left:390.59999999999997px;top:55.19999999999999px;line-height:8px;font-size:5.25px;color:#555;">warehouse_10047</div>
<div class="a" style="right:158.80000000000007px;top:55.19999999999999px;line-height:8px;font-size:5.25px;color:#555">44</div>
<div class="a" style="right:116.30000000000007px;top:55.19999999999999px;line-height:8px;font-size:5.25px;color:#555">2.25</div>
<div class="a" style="right:74.70000000000005px;top:55.19999999999999px;line-height:8px;font-size:5.25px;color:#555">6.6</div>
<div class="a" style="right:25.800000000000068px;top:55.19999999999999px;line-height:8px;font-size:5.25px;color:#555">4.99</div>
<div class="a" style="left:0;top:63.69999999999999px;width:660.3px;height:0.6px;background:#e6e6e6"></div>
<div class="a" style="left:3.700000000000003px;top:65.88px;line-height:8px;font-size:5.25px;color:#555;letter-spacing:-0.06px;">Oct 11, 2023</div>
<div class="a" style="left:51.7px;top:65.88px;line-height:8px;font-size:5.25px;color:#555;letter-spacing:0.08px;">order_number_252464105</div>
<div class="a" style="left:133.8px;top:65.88px;line-height:8px;font-size:5.25px;color:#555;letter-spacing:0.06px;">United States of America</div>
<div class="a" style="left:223.0px;top:65.88px;line-height:8px;font-size:5.25px;color:#555;transform:scaleX(0.875);transform-origin:0 0;">CHESTERFIELD</div>
<div class="a" style="left:315.2px;top:65.88px;line-height:8px;font-size:5.25px;color:#555;">VA</div>
<div class="a" style="left:349.59999999999997px;top:65.88px;line-height:8px;font-size:5.25px;color:#555;">23832-8455</div>
<div class="a" style="left:390.59999999999997px;top:65.88px;line-height:8px;font-size:5.25px;color:#555;">warehouse_10047</div>
<div class="a" style="right:158.80000000000007px;top:65.88px;line-height:8px;font-size:5.25px;color:#555">4</div>
<div class="a" style="right:116.30000000000007px;top:65.88px;line-height:8px;font-size:5.25px;color:#555">0.24</div>
<div class="a" style="right:74.70000000000005px;top:65.88px;line-height:8px;font-size:5.25px;color:#555">0</div>
<div class="a" style="right:25.800000000000068px;top:65.88px;line-height:8px;font-size:5.25px;color:#555">0</div>
<div class="a" style="left:0;top:74.38px;width:660.3px;height:0.6px;background:#e6e6e6"></div>
<div class="a" style="left:3.700000000000003px;top:76.56px;line-height:8px;font-size:5.25px;color:#555;letter-spacing:-0.06px;">Oct 11, 2023</div>
<div class="a" style="left:51.7px;top:76.56px;line-height:8px;font-size:5.25px;color:#555;letter-spacing:0.08px;">order_number_252466418</div>
<div class="a" style="left:133.8px;top:76.56px;line-height:8px;font-size:5.25px;color:#555;letter-spacing:0.06px;">United States of America</div>
<div class="a" style="left:223.0px;top:76.56px;line-height:8px;font-size:5.25px;color:#555;transform:scaleX(0.875);transform-origin:0 0;">ANN ARBOR</div>
<div class="a" style="left:315.2px;top:76.56px;line-height:8px;font-size:5.25px;color:#555;">MI</div>
<div class="a" style="left:349.59999999999997px;top:76.56px;line-height:8px;font-size:5.25px;color:#555;">48105-3604</div>
<div class="a" style="left:390.59999999999997px;top:76.56px;line-height:8px;font-size:5.25px;color:#555;">warehouse_10047</div>
<div class="a" style="right:158.80000000000007px;top:76.56px;line-height:8px;font-size:5.25px;color:#555">399</div>
<div class="a" style="right:116.30000000000007px;top:76.56px;line-height:8px;font-size:5.25px;color:#555">20.35</div>
<div class="a" style="right:74.70000000000005px;top:76.56px;line-height:8px;font-size:5.25px;color:#555">59.85</div>
<div class="a" style="right:25.800000000000068px;top:76.56px;line-height:8px;font-size:5.25px;color:#555">0</div>
<div class="a" style="left:0;top:85.06px;width:660.3px;height:0.6px;background:#e6e6e6"></div>
<div class="a" style="left:3.700000000000003px;top:87.23999999999995px;line-height:8px;font-size:5.25px;color:#555;letter-spacing:-0.06px;">Oct 11, 2023</div>
<div class="a" style="left:51.7px;top:87.23999999999995px;line-height:8px;font-size:5.25px;color:#555;letter-spacing:0.08px;">order_number_252470310</div>
<div class="a" style="left:133.8px;top:87.23999999999995px;line-height:8px;font-size:5.25px;color:#555;letter-spacing:0.06px;">United States of America</div>
<div class="a" style="left:223.0px;top:87.23999999999995px;line-height:8px;font-size:5.25px;color:#555;transform:scaleX(0.875);transform-origin:0 0;">GRAND RAPIDS</div>
<div class="a" style="left:315.2px;top:87.23999999999995px;line-height:8px;font-size:5.25px;color:#555;">MI</div>
<div class="a" style="left:349.59999999999997px;top:87.23999999999995px;line-height:8px;font-size:5.25px;color:#555;">49506-4136</div>
<div class="a" style="left:390.59999999999997px;top:87.23999999999995px;line-height:8px;font-size:5.25px;color:#555;">warehouse_10047</div>
<div class="a" style="right:158.80000000000007px;top:87.23999999999995px;line-height:8px;font-size:5.25px;color:#555">9</div>
<div class="a" style="right:116.30000000000007px;top:87.23999999999995px;line-height:8px;font-size:5.25px;color:#555">0</div>
<div class="a" style="right:74.70000000000005px;top:87.23999999999995px;line-height:8px;font-size:5.25px;color:#555">9</div>
<div class="a" style="right:25.800000000000068px;top:87.23999999999995px;line-height:8px;font-size:5.25px;color:#555">0</div>
<div class="a" style="left:0;top:95.73999999999995px;width:660.3px;height:0.6px;background:#e6e6e6"></div>
<div class="a" style="left:3.700000000000003px;top:97.92000000000002px;line-height:8px;font-size:5.25px;color:#555;letter-spacing:-0.06px;">Oct 11, 2023</div>
<div class="a" style="left:51.7px;top:97.92000000000002px;line-height:8px;font-size:5.25px;color:#555;letter-spacing:0.08px;">order_number_252472295</div>
<div class="a" style="left:133.8px;top:97.92000000000002px;line-height:8px;font-size:5.25px;color:#555;letter-spacing:0.06px;">United States of America</div>
<div class="a" style="left:223.0px;top:97.92000000000002px;line-height:8px;font-size:5.25px;color:#555;transform:scaleX(0.875);transform-origin:0 0;">HUNTSVILLE</div>
<div class="a" style="left:315.2px;top:97.92000000000002px;line-height:8px;font-size:5.25px;color:#555;">AL</div>
<div class="a" style="left:349.59999999999997px;top:97.92000000000002px;line-height:8px;font-size:5.25px;color:#555;">35802-2055</div>
<div class="a" style="left:390.59999999999997px;top:97.92000000000002px;line-height:8px;font-size:5.25px;color:#555;">warehouse_10047</div>
<div class="a" style="right:158.80000000000007px;top:97.92000000000002px;line-height:8px;font-size:5.25px;color:#555">117.22</div>
<div class="a" style="right:116.30000000000007px;top:97.92000000000002px;line-height:8px;font-size:5.25px;color:#555">0</div>
<div class="a" style="right:74.70000000000005px;top:97.92000000000002px;line-height:8px;font-size:5.25px;color:#555">9.45</div>
<div class="a" style="right:25.800000000000068px;top:97.92000000000002px;line-height:8px;font-size:5.25px;color:#555">0</div>
<div class="a" style="left:0;top:106.42000000000002px;width:660.3px;height:0.6px;background:#e6e6e6"></div>
<div class="a" style="left:3.700000000000003px;top:108.59999999999997px;line-height:8px;font-size:5.25px;color:#555;letter-spacing:-0.06px;">Oct 11, 2023</div>
<div class="a" style="left:51.7px;top:108.59999999999997px;line-height:8px;font-size:5.25px;color:#555;letter-spacing:0.08px;">order_number_252472651</div>
<div class="a" style="left:133.8px;top:108.59999999999997px;line-height:8px;font-size:5.25px;color:#555;letter-spacing:0.06px;">United States of America</div>
<div class="a" style="left:223.0px;top:108.59999999999997px;line-height:8px;font-size:5.25px;color:#555;transform:scaleX(0.875);transform-origin:0 0;">PHILADELPHIA</div>
<div class="a" style="left:315.2px;top:108.59999999999997px;line-height:8px;font-size:5.25px;color:#555;">PA</div>
<div class="a" style="left:349.59999999999997px;top:108.59999999999997px;line-height:8px;font-size:5.25px;color:#555;">19139-4631</div>
<div class="a" style="left:390.59999999999997px;top:108.59999999999997px;line-height:8px;font-size:5.25px;color:#555;">warehouse_10047</div>
<div class="a" style="right:158.80000000000007px;top:108.59999999999997px;line-height:8px;font-size:5.25px;color:#555">49</div>
<div class="a" style="right:116.30000000000007px;top:108.59999999999997px;line-height:8px;font-size:5.25px;color:#555">2.95</div>
<div class="a" style="right:74.70000000000005px;top:108.59999999999997px;line-height:8px;font-size:5.25px;color:#555">0</div>
<div class="a" style="right:25.800000000000068px;top:108.59999999999997px;line-height:8px;font-size:5.25px;color:#555">0</div>
<div class="a" style="left:0;top:117.09999999999997px;width:660.3px;height:0.6px;background:#e6e6e6"></div>
<div class="a" style="left:3.700000000000003px;top:119.28000000000003px;line-height:8px;font-size:5.25px;color:#555;letter-spacing:-0.06px;">Oct 11, 2023</div>
<div class="a" style="left:51.7px;top:119.28000000000003px;line-height:8px;font-size:5.25px;color:#555;letter-spacing:0.08px;">order_number_252476269</div>
<div class="a" style="left:133.8px;top:119.28000000000003px;line-height:8px;font-size:5.25px;color:#555;letter-spacing:0.06px;">United States of America</div>
<div class="a" style="left:223.0px;top:119.28000000000003px;line-height:8px;font-size:5.25px;color:#555;transform:scaleX(0.875);transform-origin:0 0;">WEST DES MOINES</div>
<div class="a" style="left:315.2px;top:119.28000000000003px;line-height:8px;font-size:5.25px;color:#555;">IA</div>
<div class="a" style="left:349.59999999999997px;top:119.28000000000003px;line-height:8px;font-size:5.25px;color:#555;">50265-3716</div>
<div class="a" style="left:390.59999999999997px;top:119.28000000000003px;line-height:8px;font-size:5.25px;color:#555;">warehouse_10047</div>
<div class="a" style="right:158.80000000000007px;top:119.28000000000003px;line-height:8px;font-size:5.25px;color:#555">147</div>
<div class="a" style="right:116.30000000000007px;top:119.28000000000003px;line-height:8px;font-size:5.25px;color:#555">10.29</div>
<div class="a" style="right:74.70000000000005px;top:119.28000000000003px;line-height:8px;font-size:5.25px;color:#555">0</div>
<div class="a" style="right:25.800000000000068px;top:119.28000000000003px;line-height:8px;font-size:5.25px;color:#555">0</div>
<div class="a" style="left:0;top:127.78000000000003px;width:660.3px;height:0.6px;background:#e6e6e6"></div>
<div class="a" style="left:3.700000000000003px;top:129.95999999999998px;line-height:8px;font-size:5.25px;color:#555;letter-spacing:-0.06px;">Oct 11, 2023</div>
<div class="a" style="left:51.7px;top:129.95999999999998px;line-height:8px;font-size:5.25px;color:#555;letter-spacing:0.08px;">order_number_252478254</div>
<div class="a" style="left:133.8px;top:129.95999999999998px;line-height:8px;font-size:5.25px;color:#555;letter-spacing:0.06px;">Canada</div>
<div class="a" style="left:223.0px;top:129.95999999999998px;line-height:8px;font-size:5.25px;color:#555;">Victoria</div>
<div class="a" style="left:315.2px;top:129.95999999999998px;line-height:8px;font-size:5.25px;color:#555;">BC</div>
<div class="a" style="left:349.59999999999997px;top:129.95999999999998px;line-height:8px;font-size:5.25px;color:#555;">V98 157</div>
<div class="a" style="left:390.59999999999997px;top:129.95999999999998px;line-height:8px;font-size:5.25px;color:#555;">warehouse_10047</div>
<div class="a" style="right:158.80000000000007px;top:129.95999999999998px;line-height:8px;font-size:5.25px;color:#555">3.72</div>
<div class="a" style="right:116.30000000000007px;top:129.95999999999998px;line-height:8px;font-size:5.25px;color:#555">0</div>
<div class="a" style="right:74.70000000000005px;top:129.95999999999998px;line-height:8px;font-size:5.25px;color:#555">0</div>
<div class="a" style="right:25.800000000000068px;top:129.95999999999998px;line-height:8px;font-size:5.25px;color:#555">0</div>
<div class="a" style="left:0;top:138.45999999999998px;width:660.3px;height:0.6px;background:#e6e6e6"></div>
<div class="a" style="left:3.700000000000003px;top:140.64000000000004px;line-height:8px;font-size:5.25px;color:#555;letter-spacing:-0.06px;">Oct 11, 2023</div>
<div class="a" style="left:51.7px;top:140.64000000000004px;line-height:8px;font-size:5.25px;color:#555;letter-spacing:0.08px;">order_number_252478255</div>
<div class="a" style="left:133.8px;top:140.64000000000004px;line-height:8px;font-size:5.25px;color:#555;letter-spacing:0.06px;">United States of America</div>
<div class="a" style="left:223.0px;top:140.64000000000004px;line-height:8px;font-size:5.25px;color:#555;">Alanson</div>
<div class="a" style="left:315.2px;top:140.64000000000004px;line-height:8px;font-size:5.25px;color:#555;">MI</div>
<div class="a" style="left:349.59999999999997px;top:140.64000000000004px;line-height:8px;font-size:5.25px;color:#555;">49706</div>
<div class="a" style="left:390.59999999999997px;top:140.64000000000004px;line-height:8px;font-size:5.25px;color:#555;">warehouse_10047</div>
<div class="a" style="right:158.80000000000007px;top:140.64000000000004px;line-height:8px;font-size:5.25px;color:#555">129</div>
<div class="a" style="right:116.30000000000007px;top:140.64000000000004px;line-height:8px;font-size:5.25px;color:#555">6.58</div>
<div class="a" style="right:74.70000000000005px;top:140.64000000000004px;line-height:8px;font-size:5.25px;color:#555">19.35</div>
<div class="a" style="right:25.800000000000068px;top:140.64000000000004px;line-height:8px;font-size:5.25px;color:#555">0</div>
<div class="a" style="left:0;top:149.14000000000004px;width:660.3px;height:0.6px;background:#e6e6e6"></div>
<div class="a" style="left:3.700000000000003px;top:151.32px;line-height:8px;font-size:5.25px;color:#555;letter-spacing:-0.06px;">Oct 11, 2023</div>
<div class="a" style="left:51.7px;top:151.32px;line-height:8px;font-size:5.25px;color:#555;letter-spacing:0.08px;">order_number_252480675</div>
<div class="a" style="left:133.8px;top:151.32px;line-height:8px;font-size:5.25px;color:#555;letter-spacing:0.06px;">United States of America</div>
<div class="a" style="left:223.0px;top:151.32px;line-height:8px;font-size:5.25px;color:#555;transform:scaleX(0.875);transform-origin:0 0;">NEW YORK</div>
<div class="a" style="left:315.2px;top:151.32px;line-height:8px;font-size:5.25px;color:#555;">NY</div>
<div class="a" style="left:349.59999999999997px;top:151.32px;line-height:8px;font-size:5.25px;color:#555;">10016-6456</div>
<div class="a" style="left:390.59999999999997px;top:151.32px;line-height:8px;font-size:5.25px;color:#555;">warehouse_10047</div>
<div class="a" style="right:158.80000000000007px;top:151.32px;line-height:8px;font-size:5.25px;color:#555">6</div>
<div class="a" style="right:116.30000000000007px;top:151.32px;line-height:8px;font-size:5.25px;color:#555">0.98</div>
<div class="a" style="right:74.70000000000005px;top:151.32px;line-height:8px;font-size:5.25px;color:#555">0</div>
<div class="a" style="right:25.800000000000068px;top:151.32px;line-height:8px;font-size:5.25px;color:#555">4.99</div>
<div class="a" style="left:0;top:159.82px;width:660.3px;height:0.6px;background:#e6e6e6"></div>
<div class="a" style="left:3.700000000000003px;top:161.99999999999994px;line-height:8px;font-size:5.25px;color:#555;letter-spacing:-0.06px;">Oct 11, 2023</div>
<div class="a" style="left:51.7px;top:161.99999999999994px;line-height:8px;font-size:5.25px;color:#555;letter-spacing:0.08px;">order_number_252482514</div>
<div class="a" style="left:133.8px;top:161.99999999999994px;line-height:8px;font-size:5.25px;color:#555;letter-spacing:0.06px;">United States of America</div>
<div class="a" style="left:223.0px;top:161.99999999999994px;line-height:8px;font-size:5.25px;color:#555;transform:scaleX(0.875);transform-origin:0 0;">ANNAPOLIS</div>
<div class="a" style="left:315.2px;top:161.99999999999994px;line-height:8px;font-size:5.25px;color:#555;">MD</div>
<div class="a" style="left:349.59999999999997px;top:161.99999999999994px;line-height:8px;font-size:5.25px;color:#555;">21409-5547</div>
<div class="a" style="left:390.59999999999997px;top:161.99999999999994px;line-height:8px;font-size:5.25px;color:#555;">warehouse_10047</div>
<div class="a" style="right:158.80000000000007px;top:161.99999999999994px;line-height:8px;font-size:5.25px;color:#555">6</div>
<div class="a" style="right:116.30000000000007px;top:161.99999999999994px;line-height:8px;font-size:5.25px;color:#555">0.36</div>
<div class="a" style="right:74.70000000000005px;top:161.99999999999994px;line-height:8px;font-size:5.25px;color:#555">0</div>
<div class="a" style="right:25.800000000000068px;top:161.99999999999994px;line-height:8px;font-size:5.25px;color:#555">4.99</div>
<div class="a" style="left:0;top:170.49999999999994px;width:660.3px;height:0.6px;background:#e6e6e6"></div>
<div class="a" style="left:3.700000000000003px;top:172.68px;line-height:8px;font-size:5.25px;color:#555;letter-spacing:-0.06px;">Oct 11, 2023</div>
<div class="a" style="left:51.7px;top:172.68px;line-height:8px;font-size:5.25px;color:#555;letter-spacing:0.08px;">order_number_252492748</div>
<div class="a" style="left:133.8px;top:172.68px;line-height:8px;font-size:5.25px;color:#555;letter-spacing:0.06px;">United States of America</div>
<div class="a" style="left:223.0px;top:172.68px;line-height:8px;font-size:5.25px;color:#555;transform:scaleX(0.875);transform-origin:0 0;">LOS ANGELES</div>
<div class="a" style="left:315.2px;top:172.68px;line-height:8px;font-size:5.25px;color:#555;">CA</div>
<div class="a" style="left:349.59999999999997px;top:172.68px;line-height:8px;font-size:5.25px;color:#555;">90036-2853</div>
<div class="a" style="left:390.59999999999997px;top:172.68px;line-height:8px;font-size:5.25px;color:#555;">warehouse_10047</div>
<div class="a" style="right:158.80000000000007px;top:172.68px;line-height:8px;font-size:5.25px;color:#555">3.03</div>
<div class="a" style="right:116.30000000000007px;top:172.68px;line-height:8px;font-size:5.25px;color:#555">0.28</div>
<div class="a" style="right:74.70000000000005px;top:172.68px;line-height:8px;font-size:5.25px;color:#555">0</div>
<div class="a" style="right:25.800000000000068px;top:172.68px;line-height:8px;font-size:5.25px;color:#555">2.5</div>
<div class="a" style="left:0;top:181.18px;width:660.3px;height:0.6px;background:#e6e6e6"></div>
</div>
<div class="a" style="left:72.8px;top:600.4px;width:660.3000000000001px;height:10px;background:#fff"></div>
<div class="a" style="left:118.8px;top:600.6px;width:0.5px;height:10px;background:#f3f3f3"></div>
<div class="a" style="left:202.3px;top:600.6px;width:0.5px;height:10px;background:#f3f3f3"></div>
<div class="a" style="left:385px;top:600.6px;width:0.5px;height:10px;background:#f3f3f3"></div>
<div class="a" style="left:420px;top:600.6px;width:0.5px;height:10px;background:#f3f3f3"></div>
<div class="a" style="left:541px;top:600.6px;width:0.5px;height:10px;background:#f3f3f3"></div>
<div class="a" style="left:581px;top:600.6px;width:0.5px;height:10px;background:#f3f3f3"></div>
<div class="a" style="left:622px;top:600.6px;width:0.5px;height:10px;background:#f3f3f3"></div>
<div class="a" style="left:664px;top:600.6px;width:0.5px;height:10px;background:#f3f3f3"></div>
<div class="a b" style="left:76.5px;top:601.5px;line-height:8px;font-size:5.45px;color:#333">Total</div>
<div class="a b" style="right:175.70000000000005px;top:601.5px;line-height:8px;font-size:5.45px;color:#333">109,960.95</div>
<div class="a b" style="right:133.20000000000005px;top:601.5px;line-height:8px;font-size:5.45px;color:#333">6,967.58</div>
<div class="a b" style="right:91.60000000000002px;top:601.5px;line-height:8px;font-size:5.45px;color:#333">10,290.22</div>
<div class="a b" style="right:42.700000000000045px;top:601.5px;line-height:8px;font-size:5.45px;color:#333">3,825.52</div>
<div class="a" style="left:72.8px;top:611.6px;width:628px;height:3.2px;background:#8a8a8a;border-radius:2px"></div>
<div class="a" style="left:733.8px;top:411.7px;width:2.8px;height:7.2px;background:#9a9a9a;border-radius:1.4px"></div>
<svg class="a" style="left:708px;top:621px" width="5" height="5" viewBox="0 0 5 5"><rect x="0" y="0" width="4.8" height="4.8" rx="0.5" fill="#111"/><path d="M0.6,3.2 L4.2,1.2 L4.2,2.2 L0.6,4.2Z" fill="#fff" opacity="0.6"/></svg>
<div class="a" style="left:714.4px;top:621.5px;line-height:5px;font-size:3.2px;color:#667">Powered by QuickSight</div>
</body></html>
